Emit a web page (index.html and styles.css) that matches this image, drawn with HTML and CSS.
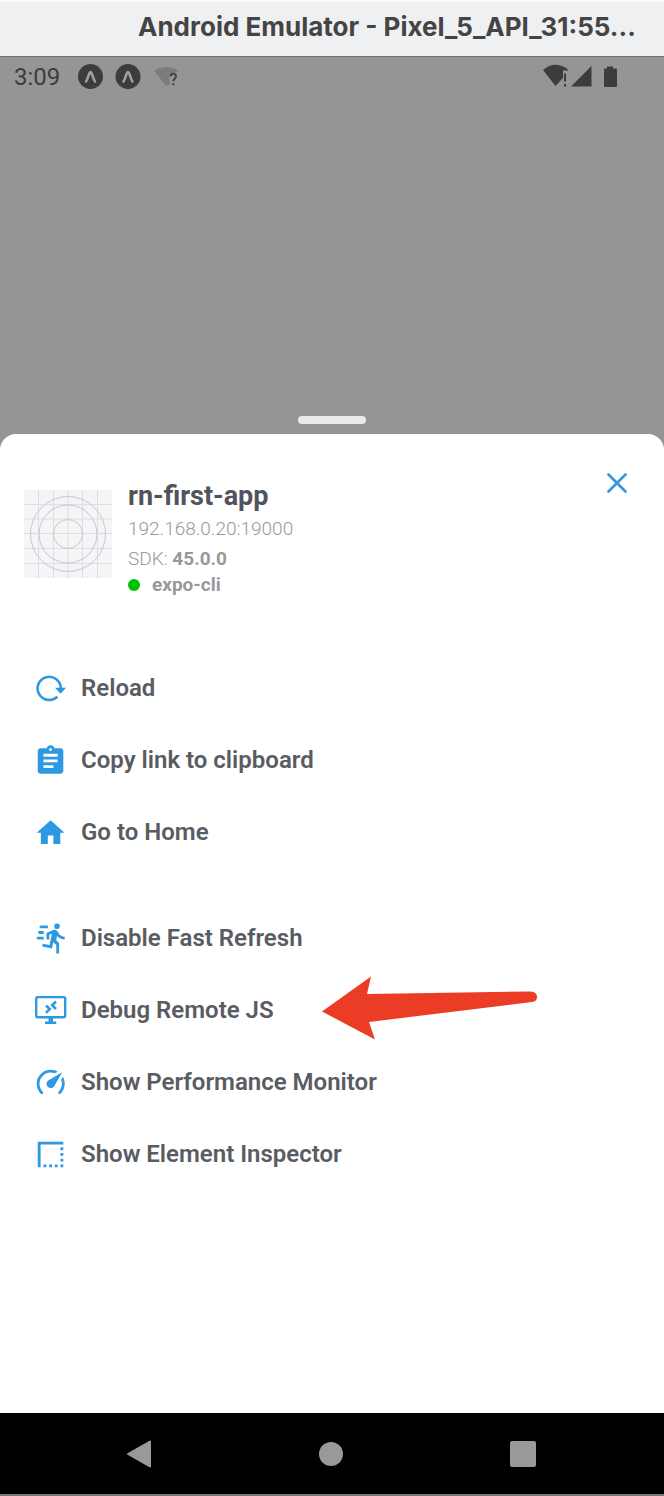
FILE: index.html
```html
<!DOCTYPE html>
<html lang="en">
<head>
<meta charset="utf-8">
<meta name="viewport" content="width=device-width, initial-scale=1">
<title>Android Emulator</title>
<link rel="stylesheet" href="styles.css">
</head>
<body>
<header class="titlebar"><h1 class="titlebar-text">Android Emulator - Pixel_5_API_31:55...</h1></header>
<div class="backdrop">
  <div class="statusbar">
    <span class="clock">3:09</span>
    <svg class="status-left" width="102" height="28" viewBox="0 0 102 28" aria-hidden="true">
      <g fill="#3c3c3c"><circle cx="12.500" cy="13.500" r="12.500"/><circle cx="50" cy="13.500" r="12.500"/></g>
      <path d="M8 18.500C10 16 11 9 12.500 9S15 16 17 18.500M45.500 18.500C47.500 16 48.500 9 50 9S52.500 16 54.500 18.500" fill="none" stroke="#a0a0a0" stroke-width="2.600" stroke-linecap="round"/>
      <path d="M76 7.500Q88 .5 100 7.500L98 10Q91 9 91 14L92 21 88 23Z" fill="#7c7c7c"/>
      <path d="M92.500 13.500C92.500 10 98 10 98 13.300C98 15.700 95.300 15.700 95.300 18.300M95.300 20.200V22.200" fill="none" stroke="#444" stroke-width="2"/>
    </svg>
    <svg class="status-right" width="76" height="28" viewBox="0 0 76 28" fill="#3c3c3c" aria-hidden="true">
      <path d="M0 7Q12 -3 25 6.500V7.500H20V15L12.500 23ZM21 10.500H23V18.500H21ZM21 21H23V23.500H21ZM28 23.500L48.500 3V23.500ZM64 3.500H70V5.500H73Q74 5.500 74 6.500V23Q74 24 73 24H62Q61 24 61 23V6.500Q61 5.500 62 5.500H64Z"/>
    </svg>
  </div>
  <div class="handle"></div>
</div>
<main class="sheet">
  <section class="app">
    <svg class="app-icon" width="88" height="88" viewBox="0 0 88 88" aria-hidden="true">
      <path fill="#f4f5f7" d="M0 0h88v88H0z"/>
      <path d="M14.500 0V88M29.500 0V88M44 0V88M58.500 0V88M73.500 0V88M0 14.500H88M0 29H88M0 43.500H88M0 58.500H88M0 73.500H88" stroke="#dddee1" fill="none"/>
      <g fill="none" stroke="#c6c8cb"><circle cx="44" cy="44" r="37.500"/><circle cx="44" cy="44" r="29"/><circle cx="44" cy="44" r="14.500"/></g>
    </svg>
    <div class="app-info">
      <h2 class="app-name">rn-first-app</h2>
      <p class="app-host">192.168.0.20:19000</p>
      <p class="app-sdk">SDK: <strong>45.0.0</strong></p>
      <p class="app-cli"><span class="dot"></span><strong>expo-cli</strong></p>
    </div>
    <button class="close" type="button" aria-label="Close">
      <svg width="20" height="20" viewBox="0 0 20 20" aria-hidden="true"><path d="M1.500 1.500L18.500 18.500M18.500 1.500L1.500 18.500" stroke="#3398db" stroke-width="2.600" stroke-linecap="round"/></svg>
    </button>
  </section>
  <nav class="menu">
    <div class="group">
      <button class="item" type="button"><svg class="icon" viewBox="0 0 32 32" aria-hidden="true"><path d="M25.800 16.500A11.600 11.600 0 1 0 22.400 24.600" fill="none" stroke="#2f98e2" stroke-width="2.600"/><path d="M20 15.800H31L25.500 21.800Z"/></svg>Reload</button>
      <button class="item" type="button"><svg class="icon" viewBox="0 0 32 32" aria-hidden="true"><g transform="translate(-1.500 -.1) scale(1.420)"><path d="M19 3h-4.180C14.400 1.840 13.300 1 12 1s-2.400.84-2.820 2H5c-1.100 0-2 .9-2 2v14c0 1.100.9 2 2 2h14c1.100 0 2-.9 2-2V5c0-1.100-.9-2-2-2zm-7 0c.55 0 1 .45 1 1s-.45 1-1 1-1-.45-1-1 .45-1 1-1zm2 14H7v-2h7v2zm3-4H7v-2h10v2zm0-4H7V7h10v2z"/></g></svg>Copy link to clipboard</button>
      <button class="item" type="button"><svg class="icon" viewBox="0 0 32 32" aria-hidden="true"><g transform="translate(-1.100 .1) scale(1.390)"><path d="M10 20v-6h4v6h5v-8h3L12 3 2 12h3v8z"/></g></svg>Go to Home</button>
    </div>
    <div class="group">
      <button class="item" type="button"><svg class="icon" viewBox="0 0 32 32" aria-hidden="true"><g transform="translate(-1.100 -.7) scale(1.400)"><path d="M16.500 5.500A2 2 0 0 0 18.500 3.500A2 2 0 0 0 16.500 1.500A2 2 0 0 0 14.500 3.500A2 2 0 0 0 16.500 5.500M12.900 19.400L13.900 15L16 17V23H18V15.500L15.900 13.500L16.500 10.500C17.890 12.090 19.890 13 22 13V11C20.240 11.030 18.600 10.110 17.700 8.600L16.700 7C16.340 6.400 15.700 6 15 6C14.700 6 14.500 6.100 14.200 6.100L9 8.300V13H11V9.600L12.800 8.900L11.200 17L6.300 16L5.900 18L12.900 19.400M4 9A1 1 0 0 1 3 8A1 1 0 0 1 4 7H7V9H4M5 5A1 1 0 0 1 4 4A1 1 0 0 1 5 3H10V5H5M3 13A1 1 0 0 1 2 12A1 1 0 0 1 3 11H7V13H3Z"/></g></svg>Disable Fast Refresh</button>
      <button class="item" type="button"><svg class="icon" viewBox="0 0 32 32" aria-hidden="true"><rect x="1.200" y="3.100" width="29" height="20.200" rx="1.600" fill="none" stroke="#2f98e2" stroke-width="2.400"/><path d="M13.500 24H18V27.500H21.300V30H10V27.500H13.500Z"/><path d="M11 11.500L14.800 15L11 18.800M21 7.500L17.200 11.200L21 15" fill="none" stroke="#2f98e2" stroke-width="2.600"/></svg>Debug Remote JS
        <svg class="arrow" width="216" height="64" viewBox="0 0 216 64" aria-hidden="true"><path fill="#eb3d25" d="M0 35.500L49 .5L45 18L208 15.500Q215 15.500 215 21Q215 25.500 210 26L47 46L53 63.500Z"/></svg></button>
      <button class="item" type="button"><svg class="icon" viewBox="0 0 32 32" aria-hidden="true"><g transform="translate(-1.100 -.4) scale(1.400)"><path d="M12 16A3 3 0 0 1 9 13C9 11.880 9.610 10.900 10.500 10.390L20.210 4.770L14.680 14.350C14.180 15.330 13.170 16 12 16M12 3C13.810 3 15.500 3.500 16.970 4.320L14.870 5.530C14 5.190 13 5 12 5A8 8 0 0 0 4 13C4 15.210 4.890 17.210 6.340 18.650H6.350C6.740 19.040 6.740 19.670 6.350 20.060C5.960 20.450 5.320 20.450 4.930 20.070C3.120 18.260 2 15.760 2 13A10 10 0 0 1 12 3M22 13C22 15.760 20.880 18.260 19.070 20.070C18.680 20.450 18.050 20.450 17.660 20.060C17.270 19.670 17.270 19.040 17.660 18.650C19.110 17.200 20 15.210 20 13C20 12 19.810 11 19.460 10.100L20.670 8C21.500 9.500 22 11.180 22 13Z"/></g></svg>Show Performance Monitor</button>
      <button class="item" type="button"><svg class="icon" viewBox="0 0 32 32" aria-hidden="true"><g transform="translate(-1.500 -.6) scale(1.420)"><path d="M15 21h2v-2h-2v2zm4 0h2v-2h-2v2zM7 21h2v-2H7v2zm4 0h2v-2h-2v2zm8-4h2v-2h-2v2zm0-4h2v-2h-2v2zM3 3v18h2V5h16V3H3zm16 6h2V7h-2v2z"/></g></svg>Show Element Inspector</button>
    </div>
  </nav>
</main>
<footer class="navbar">
  <button class="nav-button" type="button" aria-label="Back"><svg width="28" height="28" viewBox="0 0 28 28" aria-hidden="true"><path d="M3 14L25 1.500V26.500Z" fill="#999" stroke="#999" stroke-width="2" stroke-linejoin="round"/></svg></button>
  <button class="nav-button" type="button" aria-label="Home"><svg width="28" height="28" viewBox="0 0 28 28" aria-hidden="true"><circle cx="14" cy="14" r="12" fill="#999"/></svg></button>
  <button class="nav-button" type="button" aria-label="Overview"><svg width="28" height="28" viewBox="0 0 28 28" aria-hidden="true"><rect x="1" y="1" width="26" height="26" rx="2" fill="#999"/></svg></button>
</footer>
</body>
</html>
```
FILE: styles.css
```css
* { box-sizing: border-box; }
body {
  margin: 0;
  min-height: 100vh;
  display: flex;
  flex-direction: column;
  background: #959595;
  font-family: Roboto, "Liberation Sans", sans-serif;
}
h1, h2, p { margin: 0; }
button {
  padding: 0;
  border: 0;
  background: none;
  color: inherit;
  font: inherit;
}
svg { display: block; flex: none; }

.titlebar {
  padding: 9px 16px 13px 138px;
  border-top: 2px solid #fafafa;
  border-bottom: 1px solid #707070;
  background: #eff0f2;
}
.titlebar-text {
  overflow: hidden;
  color: #444;
  font: 700 26px/32px Inter, sans-serif;
  white-space: nowrap;
}

.backdrop {
  display: flex;
  flex-direction: column;
  justify-content: space-between;
  min-height: 377px;
  padding-bottom: 10px;
}
.statusbar {
  display: flex;
  align-items: center;
  height: 40px;
  padding: 0 45px 0 14px;
}
.clock {
  width: 64px;
  color: #3c3c3c;
  font-size: 24px;
  line-height: 40px;
}
.status-right { margin-left: auto; }
.handle {
  align-self: center;
  width: 68px;
  height: 8px;
  border-radius: 4px;
  background: #ebebeb;
}

.sheet {
  flex: 1;
  border-radius: 16px 16px 0 0;
  background: #fff;
}
.app {
  display: flex;
  align-items: flex-start;
  gap: 16px;
  padding: 38px 36px 55px 24px;
}
.app-icon { margin-top: 18px; }
.app-info { flex: 1; padding-top: 8px; }
.app-name {
  color: #50535b;
  font-size: 27px;
  font-weight: 700;
  line-height: 32px;
}
.app-host, .app-sdk, .app-cli {
  color: #96999c;
  font-size: 19px;
}
.app-host { font-weight: 300; line-height: 34px; }
.app-sdk { font-weight: 300; line-height: 26px; }
.app-sdk strong, .app-cli strong { font-weight: 700; }
.app-cli {
  display: flex;
  align-items: center;
  gap: 12px;
  line-height: 25px;
}
.dot {
  width: 12px;
  height: 12px;
  border-radius: 50%;
  background: #00c100;
}
.close { padding: 1px; }

.menu { display: grid; gap: 34px; }
.item {
  position: relative;
  display: flex;
  align-items: center;
  gap: 14px;
  width: 100%;
  height: 72px;
  padding-left: 35px;
  color: #595c61;
  font-size: 24px;
  font-weight: 600;
  text-align: left;
}
.icon { width: 32px; height: 32px; fill: #2f98e2; }
.arrow { position: absolute; left: 322px; top: 2px; }

.navbar {
  display: flex;
  justify-content: space-between;
  height: 83px;
  padding: 0 127px 0 125px;
  border-bottom: 2px solid #777;
  background: #000;
}
.nav-button { width: 28px; }
```
